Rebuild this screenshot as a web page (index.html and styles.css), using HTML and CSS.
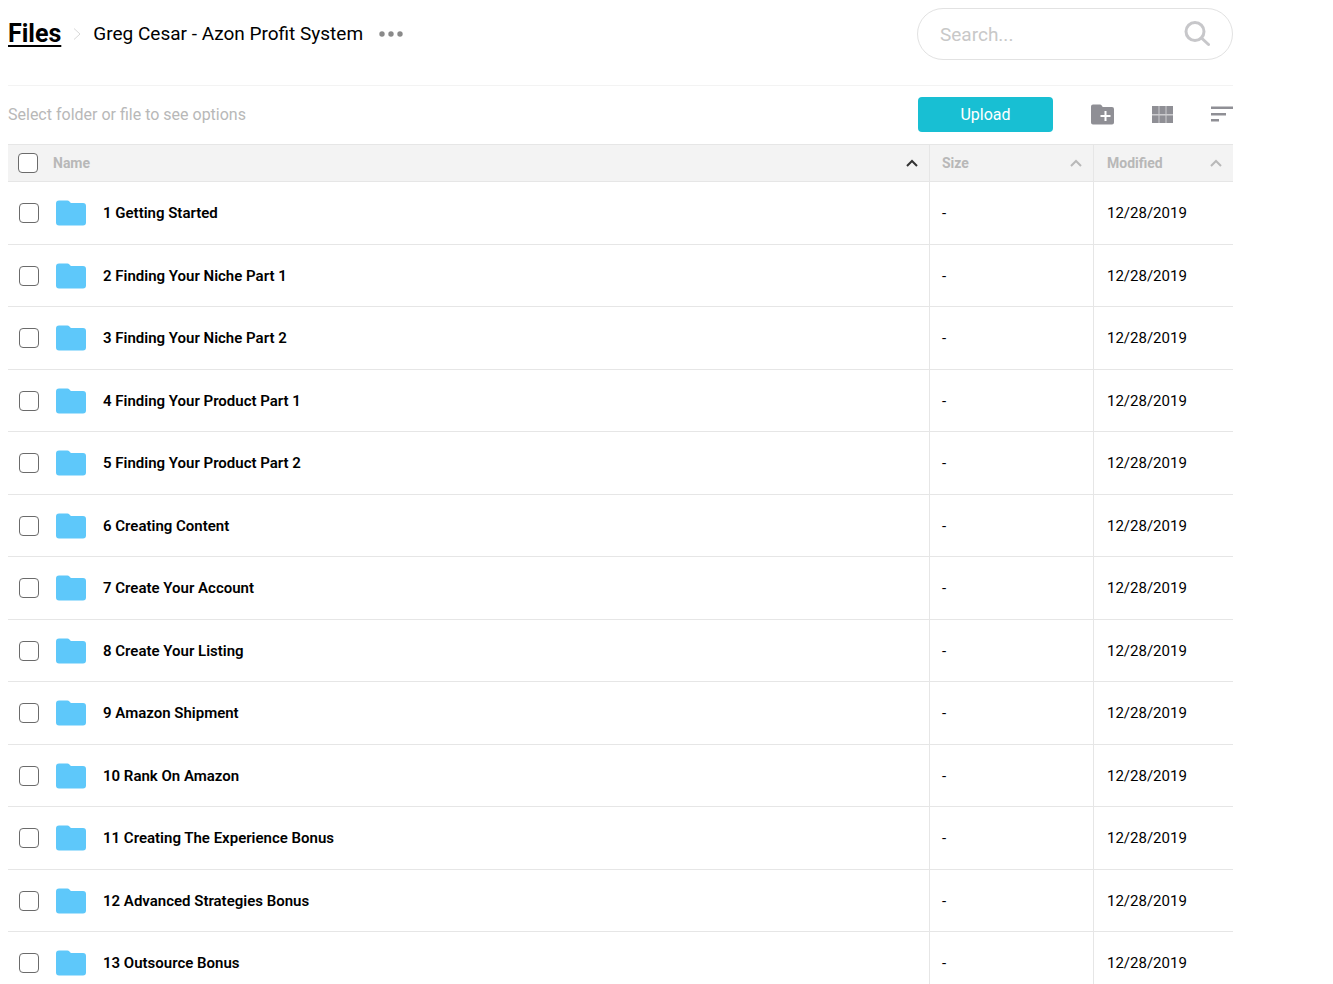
FILE: index.html
```html
<!DOCTYPE html>
<html lang="en">
<head>
<meta charset="utf-8">
<title>Greg Cesar - Azon Profit System</title>
<link rel="stylesheet" href="styles.css">
</head>
<body>
<svg class="sprite" aria-hidden="true">
  <symbol id="folder" viewBox="0 0 30 26"><path d="M3 0.500H11.500Q12.600 0.500 13.200 1.300L14.300 2.500Q14.900 3 16 3H27Q30 3 30 6V22.500Q30 25.500 27 25.500H3Q0 25.500 0 22.500V3.500Q0 0.500 3 0.500Z"/></symbol>
  <symbol id="caret" viewBox="0 0 12 8"><path d="M1 7 6 2 11 7" fill="none" stroke="currentColor" stroke-width="2"/></symbol>
</svg>
<main class="files">
  <header class="topbar">
    <nav class="crumbs" aria-label="Breadcrumb">
      <a class="crumb-root" href="#">Files</a>
      <svg class="crumb-sep" viewBox="0 0 8 12" aria-hidden="true"><path d="M1 0.500 7 6 1 11.500"/></svg>
      <h1 class="crumb-current">Greg Cesar - Azon Profit System</h1>
      <button class="more" type="button" aria-label="More options"><svg viewBox="0 0 24 6"><circle cx="3" cy="3" r="2.700"/><circle cx="12" cy="3" r="2.700"/><circle cx="21" cy="3" r="2.700"/></svg></button>
    </nav>
    <form class="search" role="search">
      <input class="search-input" type="text" placeholder="Search..." aria-label="Search">
      <button class="search-button" type="button" aria-label="Search files"><svg viewBox="0 0 26 26"><circle cx="11" cy="10.500" r="9"/><path d="M17.500 17 24.500 23.500"/></svg></button>
    </form>
  </header>
  <div class="toolbar">
    <p class="hint">Select folder or file to see options</p>
    <div class="actions">
      <button class="upload" type="button">Upload</button>
      <button class="tool" type="button" aria-label="New folder"><svg width="23" height="21" viewBox="0 0 23 21"><path fill-rule="evenodd" d="M2 0.500H9Q10 0.500 10.700 1.500L11.700 3H21Q23 3 23 5V18.500Q23 20.500 21 20.500H2Q0 20.500 0 18.500V2.500Q0 0.500 2 0.500ZM13.500 7V11H9.500V13H13.500V17H15.500V13H19.500V11H15.500V7Z"/></svg></button>
      <button class="tool" type="button" aria-label="Grid view"><svg width="21" height="17" viewBox="0 0 21 17"><path opacity=".45" d="M0 0H21V17H0Z"/><path d="M0 0H6.500V8H0ZM7.500 0H13.500V8H7.500ZM14.500 0H21V8H14.500ZM0 9.500H6.500V17H0ZM7.500 9.500H13.500V17H7.500ZM14.500 9.500H21V17H14.500Z"/></svg></button>
      <button class="tool" type="button" aria-label="Sort"><svg width="22" height="16" viewBox="0 0 22 16"><path d="M0 0.500H22V3H0ZM0 7H15V9.500H0ZM0 13H8V15.500H0Z"/></svg></button>
    </div>
  </div>
  <table class="list">
    <colgroup><col><col class="col-size"><col class="col-date"></colgroup>
    <thead>
      <tr>
        <th scope="col"><div class="head"><input class="check" type="checkbox" aria-label="Select all"><span class="head-label">Name</span><svg class="caret caret-active"><use href="#caret"/></svg></div></th>
        <th scope="col"><div class="head"><span class="head-label">Size</span><svg class="caret"><use href="#caret"/></svg></div></th>
        <th scope="col"><div class="head"><span class="head-label">Modified</span><svg class="caret"><use href="#caret"/></svg></div></th>
      </tr>
    </thead>
    <tbody id="rows"></tbody>
  </table>
</main>
<script src="files.js"></script>
</body>
</html>
```
FILE: styles.css
```css
* { box-sizing: border-box; }
html { scrollbar-width: none; }
body {
  margin: 0;
  background: #fff;
  color: #000;
  font-family: Roboto, "Liberation Sans", sans-serif;
}
button { border: 0; padding: 0; background: none; cursor: pointer; }
svg { display: block; }
.sprite { position: absolute; width: 0; height: 0; }
.files { padding: 8px 100px 0 8px; }

.topbar {
  display: flex;
  justify-content: space-between;
  align-items: flex-start;
  height: 78px;
  border-bottom: 1px solid #f3f3f3;
}
.crumbs { display: flex; align-items: center; height: 51px; }
.crumb-root { color: #000; font-size: 25px; font-weight: 700; text-underline-offset: 3px; text-decoration-thickness: 2px; }
.crumb-sep { width: 8px; height: 12px; margin: 0 12px; fill: none; stroke: #d8d8d8; }
.crumb-current { margin: 0; font-size: 19px; font-weight: 400; }
.more { margin-left: 16px; fill: #8a8a8a; }
.more svg { width: 24px; height: 6px; }

.search {
  display: flex;
  align-items: center;
  width: 316px;
  height: 52px;
  padding: 0 22px;
  border: 1px solid #e2e2e2;
  border-radius: 26px;
}
.search-input {
  flex: 1;
  min-width: 0;
  padding: 0;
  border: 0;
  outline: 0;
  background: none;
  font: 400 19px Roboto, "Liberation Sans", sans-serif;
}
.search-input::placeholder { color: #c8c8c8; opacity: 1; }
.search-button svg { width: 26px; height: 26px; fill: none; stroke: #c7c7ca; stroke-width: 3; stroke-linecap: round; }

.toolbar {
  display: flex;
  justify-content: space-between;
  align-items: center;
  height: 58px;
  padding-bottom: 2px;
}
.hint { margin: 0; color: #b8b8b8; font-size: 16px; }
.actions { display: flex; align-items: center; gap: 38px; }
.upload {
  width: 135px;
  height: 35px;
  border-radius: 4px;
  background: #18bfd3;
  color: #fff;
  font: 400 16px Roboto, "Liberation Sans", sans-serif;
}
.tool { fill: #8f8f95; }

.list { width: 100%; table-layout: fixed; border-collapse: separate; border-spacing: 0; }
.col-size { width: 164px; }
.col-date { width: 140px; }
.list th {
  height: 38px;
  padding: 0 11px 0 12px;
  border-top: 1px solid #e6e6e6;
  border-bottom: 1px solid #e6e6e6;
  background: #f3f3f3;
  color: #b8b8b8;
  font-size: 14px;
  font-weight: 700;
  text-align: left;
}
.list td { height: 62px; padding: 0 12px; border-bottom: 1px solid #e6e6e6; font-size: 15px; }
.list tbody tr:nth-child(odd) td { height: 63px; }
.list th + th, .list td + td { border-left: 1px solid #e6e6e6; }
.list th:first-child { padding-left: 10px; }
.list td:first-child { padding-left: 11px; }
.list th:last-child, .list td:last-child { padding-left: 13px; }
.head { display: flex; align-items: center; }
.head-label { flex: 1; }
.caret { width: 12px; height: 8px; color: #b8b8b8; }
.caret-active { color: #333; }
.check {
  appearance: none;
  flex: none;
  width: 20px;
  height: 20px;
  margin: 0;
  border: 1px solid #6b6b6b;
  border-radius: 4px;
  background: #fff;
}
.check:checked { background: #18bfd3; }
.head .check { margin-right: 15px; }
.entry { display: flex; align-items: center; }
.folder { width: 30px; height: 26px; margin: 0 17px; fill: #5ec8fa; }
.name { font-weight: 600; }
```
FILE: files.js
```javascript
const names = [
  "1 Getting Started",
  "2 Finding Your Niche Part 1",
  "3 Finding Your Niche Part 2",
  "4 Finding Your Product Part 1",
  "5 Finding Your Product Part 2",
  "6 Creating Content",
  "7 Create Your Account",
  "8 Create Your Listing",
  "9 Amazon Shipment",
  "10 Rank On Amazon",
  "11 Creating The Experience Bonus",
  "12 Advanced Strategies Bonus",
  "13 Outsource Bonus"
];
document.getElementById("rows").innerHTML = names.map((name, i) => `
  <tr>
    <td><div class="entry"><input class="check" type="checkbox" id="file-${i}"><svg class="folder" aria-hidden="true"><use href="#folder"/></svg><label class="name" for="file-${i}">${name}</label></div></td>
    <td>-</td>
    <td>12/28/2019</td>
  </tr>`).join("");
```
